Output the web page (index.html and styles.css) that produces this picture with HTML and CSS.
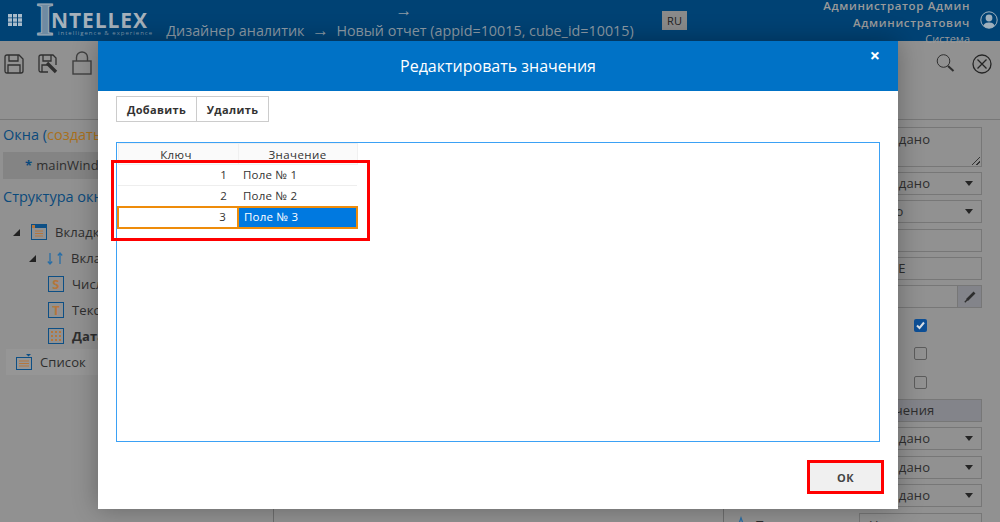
FILE: index.html
```html
<!DOCTYPE html>
<html lang="ru">
<head>
  <meta charset="UTF-8">
  <meta name="viewport" content="width=device-width, initial-scale=1.0">
  <title>Редактировать значения</title>
  <link rel="stylesheet" href="styles.css">
</head>
<body>
  <header class="top-bar">
    <svg class="apps-icon" width="14" height="12" viewBox="0 0 14 12"><path d="M0 0h4v3.4H0zM5 0h4v3.4H5zM10 0h4v3.4h-4zM0 4.3h4v3.4H0zM5 4.3h4v3.4H5zM10 4.3h4v3.4h-4zM0 8.6h4V12H0zM5 8.6h4V12H5zM10 8.6h4V12h-4z" fill="#a9bccb"/></svg>
    <div class="logo">
      <span class="logo-i">I</span>
      <div class="logo-words">
        <span class="logo-name">NTELLEX</span>
        <span class="logo-sub">intelligence &amp; experience</span>
      </div>
    </div>
    <div class="crumbs">&nbsp;&nbsp;<span class="arr">→</span><br>Дизайнер аналитик &nbsp;<span class="arr">→</span>&nbsp; Новый отчет (appid=10015, cube_id=10015)</div>
    <div class="lang">RU</div>
    <div class="user">
      <div class="user-name">Администратор Админ<br>Администратович</div>
      <div class="user-role">Система</div>
    </div>
    <svg class="avatar" width="18" height="18" viewBox="0 0 18 18"><circle cx="9" cy="9" r="8.2" fill="none" stroke="#9fb0bd" stroke-width="1"/><circle cx="9" cy="7" r="3.4" fill="#9fb0bd"/><path d="M3.4 15c.6-3 3-3.6 5.600-3.600s5 .6 5.600 3.600A8 8 0 0 1 3.400 15z" fill="#9fb0bd"/></svg>
  </header>

  <div class="toolbar">
    <div class="tool-group">
      <svg width="20" height="20" viewBox="0 0 20 20" fill="none" stroke="#303030" stroke-width="1.3"><path d="M1 3q0-2 2-2h12l4 4v12q0 2-2 2H3q-2 0-2-2z"/><path d="M5 1v6h9V1M4 19v-8h12v8"/></svg>
      <svg width="20" height="20" viewBox="0 0 20 20" fill="none" stroke="#303030" stroke-width="1.3"><path d="M1 3q0-2 2-2h12l3 3v7M10 18H3q-2 0-2-2V3"/><path d="M5 1v6h8V1M4 18v-7h6"/><path d="M9 9l9 9" stroke-width="3.4"/></svg>
      <svg class="lock" width="20" height="24" viewBox="0 0 20 24" fill="none" stroke="#404040" stroke-width="1.4"><rect x="1" y="10" width="18" height="13"/><path d="M4.500 10V6.500a5.500 5.500 0 0 1 11 0V10"/></svg>
    </div>
    <div class="tool-group wide">
      <svg width="19" height="18" viewBox="0 0 19 18" fill="none" stroke="#303030"><circle cx="7.500" cy="7" r="6.300" stroke-width="1"/><path d="M12 12l5.500 5" stroke-width="2"/></svg>
      <svg width="20" height="20" viewBox="0 0 20 20" fill="none" stroke="#252525" stroke-width="1.300"><circle cx="10" cy="10" r="9"/><path d="M5.500 5.500l9 9M14.500 5.500l-9 9"/></svg>
    </div>
  </div>

  <main class="workspace">
    <aside class="left-panel">
      <div class="panel-title">Окна (<span class="accent">создать</span>)</div>
      <div class="window-row"><span class="star">*</span>mainWindow</div>
      <div class="panel-title structure-title">Структура окна</div>
      <ul class="tree">
        <li class="tree-row">
          <i class="caret"></i>
          <svg class="node-icon" width="16" height="16" viewBox="0 0 16 16" fill="none"><rect x=".5" y=".5" width="15" height="15" stroke="#0d4f85"/><path d="M1 1h14v3H1z" fill="#0d4f85"/><path d="M1 1h3v3H1z" fill="#b5763c"/><path d="M4 7h8M4 9.500h8M4 12h8" stroke="#b5763c"/></svg>
          <span>Вкладки</span>
        </li>
        <li class="tree-row indent-1">
          <i class="caret"></i>
          <svg class="node-icon" width="16" height="16" viewBox="0 0 16 16" fill="none" stroke="#2a6ea5" stroke-width="1.300"><path d="M3 3v11M.8 11.500L3 14l2.200-2.500M13 14V3M10.800 5.500L13 3l2.200 2.500"/></svg>
          <span>Вкладка</span>
        </li>
        <li class="tree-row indent-2">
          <span class="box-icon">S</span><span>Числовое</span>
        </li>
        <li class="tree-row indent-2">
          <span class="box-icon">T</span><span>Текстовое</span>
        </li>
        <li class="tree-row indent-2">
          <svg class="node-icon" width="16" height="16" viewBox="0 0 16 16" fill="none"><rect x=".5" y=".5" width="15" height="15" stroke="#0d4f85"/><path d="M3 3h2v2H3zM7 3h2v2H7zM11 3h2v2h-2zM3 7h2v2H3zM7 7h2v2H7zM11 7h2v2h-2zM3 11h2v2H3zM7 11h2v2H7zM11 11h2v2h-2z" fill="#b5763c"/></svg>
          <b>Дата</b>
        </li>
        <li class="tree-row list-row">
          <svg class="node-icon" width="16" height="16" viewBox="0 0 16 16" fill="none"><rect x=".5" y="3.500" width="15" height="12" stroke="#0d4f85"/><path d="M3 7h10M3 9.500h10M3 12h10" stroke="#b5763c"/><path d="M10 0h5l-2.500 2.500z" fill="#0d4f85"/></svg>
          <span>Список</span>
        </li>
      </ul>
    </aside>

    <section class="center-panel"></section>

    <aside class="right-panel">
      <div class="field tall">Не задано<i class="grip"></i></div>
      <div class="field">Не задано<i class="arrow"></i></div>
      <div class="field">Никто<i class="arrow"></i></div>
      <div class="field"></div>
      <div class="field upper">ПОЛЕ</div>
      <div class="field-pair">
        <div class="field"></div>
        <div class="pen-btn">
          <svg width="12" height="12" viewBox="0 0 12 12" fill="none" stroke="#2e2e2e"><path d="M3 9l7.500-7.500" stroke-width="2.600"/><path d="M3.500 8.500L.8 11.200" stroke-width="1.400"/></svg>
        </div>
      </div>
      <div class="check-row"><i class="check on">
        <svg width="13" height="13" viewBox="0 0 13 13" fill="none" stroke="#d8dfe6" stroke-width="2"><path d="M3 6.500l2.500 2.500 4.500-5.500"/></svg>
      </i></div>
      <div class="check-row"><i class="check"></i></div>
      <div class="check-row"><i class="check"></i></div>
      <div class="field bar">Значения</div>
      <div class="field">Не задано<i class="arrow"></i></div>
      <div class="field">Не задано<i class="arrow"></i></div>
      <div class="field">Не задано<i class="arrow"></i></div>
      <div class="last-row">
        <svg width="14" height="14" viewBox="0 0 14 14" fill="none" stroke="#2a6ea5" stroke-width="1.300"><path d="M1 13L5 2l4 11M3 9h5"/></svg>
        <span class="last-label">Подпись</span>
        <div class="field">Не задано</div>
      </div>
    </aside>
  </main>

  <div class="modal">
    <div class="modal-head">
      Редактировать значения
      <span class="modal-close">×</span>
    </div>
    <div class="modal-body">
      <div class="btn-group">
        <button class="btn">Добавить</button>
        <button class="btn">Удалить</button>
      </div>
      <div class="grid-box">
        <table class="values">
          <thead>
            <tr><th class="key-head">Ключ</th><th>Значение</th></tr>
          </thead>
          <tbody>
            <tr><td class="key">1</td><td>Поле № 1</td></tr>
            <tr><td class="key">2</td><td>Поле № 2</td></tr>
            <tr class="selected"><td class="key">3</td><td>Поле № 3</td></tr>
          </tbody>
        </table>
        <div class="mark-table"></div>
      </div>
      <div class="modal-foot">
        <button class="ok-btn">ОК</button>
      </div>
    </div>
  </div>
</body>
</html>
```

FILE: styles.css
```css
* {
  box-sizing: border-box;
}
html, body {
  height: 100%;
}
body {
  margin: 0;
  position: relative;
  height: 522px;
  overflow: hidden;
  background-color: #919191;
  color: #2e2e2e;
  font-family: "Open Sans", "Noto Sans", sans-serif;
  font-size: 13px;
}

/* top bar */
.top-bar {
  display: flex;
  height: 41px;
  background-color: #004274;
  color: #8c9aa5;
}
.apps-icon {
  margin: 14px 0 0 8px;
  flex: none;
}
.logo {
  display: flex;
  width: 115px;
  margin-left: 14px;
  color: #a3aeb8;
}
.logo-i {
  width: 15px;
  margin-top: -5px;
  font: bold 46px/50px "Liberation Serif", serif;
  color: #6f8ba2;
  -webkit-text-stroke: 1px #a3aeb8;
}
.logo-words {
  display: flex;
  flex-direction: column;
  margin-top: 10px;
}
.logo-name {
  font: bold 21px/20px "Open Sans", sans-serif;
  letter-spacing: .9px;
  color: #a6b1bb;
}
.logo-sub {
  margin-left: 7px;
  font-size: 6px;
  line-height: 7px;
  letter-spacing: 1px;
  white-space: nowrap;
  color: #7f97aa;
}
.crumbs {
  width: 480px;
  margin-left: 9px;
  padding-top: 1px;
  text-align: center;
  font-size: 14.35px;
  line-height: 20px;
}
.arr {
  font-family: "Liberation Sans", sans-serif;
  font-size: 17px;
}
.lang {
  width: 25px;
  height: 19px;
  margin: 11px 0 0 22px;
  background-color: #8a8a8a;
  color: #1d1d1d;
  font-size: 11px;
  line-height: 19px;
  text-align: center;
}
.user {
  flex: 1;
  text-align: right;
  font-size: 11.5px;
  line-height: 17px;
  margin-top: -3px;
  color: #9a9a9a;
  white-space: nowrap;
}
.user-name {
  font-weight: 600;
  letter-spacing: .65px;
}
.user-role {
  line-height: 15px;
  font-size: 11px;
}
.avatar {
  margin: 11px 2px 0 10px;
  flex: none;
}

/* toolbar */
.toolbar {
  display: flex;
  justify-content: space-between;
  height: 79px;
  padding: 11px 8px 0 4px;
  border-bottom: 1px solid #777;
}
.tool-group {
  display: flex;
  align-items: flex-start;
  gap: 14px;
}
.tool-group.wide {
  gap: 17px;
}
.tool-group svg {
  margin-top: 2px;
}
.tool-group .lock {
  margin-top: -1px;
}
.workspace {
  display: grid;
  grid-template-columns: 273px 1fr 276px;
  height: 402px;
}

/* left */
.left-panel {
  padding: 5px 0 0 3px;
}
.panel-title {
  font-size: 14.5px;
  line-height: 20px;
  color: #0b4a7c;
  white-space: nowrap;
}
.accent {
  color: #a9701c;
}
.window-row {
  height: 27px;
  margin-top: 7px;
  padding-left: 22px;
  background-color: #848484;
  line-height: 27px;
  letter-spacing: .1px;
}
.star {
  margin-right: 4px;
  color: #0b4a7c;
  font-weight: bold;
}
.structure-title {
  margin-top: 8px;
}
.tree {
  list-style: none;
  margin: 12px 0 0;
  padding: 0;
}
.tree-row {
  display: flex;
  align-items: center;
  height: 26px;
  padding-left: 10px;
  letter-spacing: .1px;
}
.caret {
  width: 0;
  height: 0;
  margin-right: 11px;
  border-style: solid;
  border-width: 0 0 7px 7px;
  border-color: transparent transparent #222 transparent;
}
.node-icon {
  flex: none;
  margin-right: 8px;
}
.indent-1 {
  padding-left: 26px;
}
.indent-2 {
  padding-left: 45px;
}
.box-icon {
  width: 16px;
  height: 16px;
  margin-right: 8px;
  border: 1px solid #0d4f85;
  color: #b5763c;
  font-size: 13px;
  font-weight: bold;
  line-height: 14px;
  text-align: center;
}
.list-row {
  margin-left: 3px;
  padding-left: 10px;
  background-color: #969696;
}

/* center + right */
.center-panel {
  border-left: 1px solid #6e6e6e;
  border-right: 1px solid #6e6e6e;
}
.right-panel {
  display: flex;
  flex-direction: column;
  align-items: flex-end;
  gap: 5.4px;
  padding: 6.5px 18px 0 0;
}
.field {
  position: relative;
  flex: none;
  width: 123px;
  height: 23px;
  padding-left: 4px;
  border: 1px solid #777;
  line-height: 21px;
  letter-spacing: .2px;
  white-space: nowrap;
}
.field.tall {
  height: 40px;
  padding-top: 1px;
}
.field.upper {
  padding-left: 9px;
}
.field-pair {
  display: flex;
  flex: none;
}
.field-pair .field {
  width: 99px;
}
.pen-btn {
  display: flex;
  align-items: center;
  justify-content: center;
  width: 25px;
  height: 23px;
  margin-left: -1px;
  background-color: #83848a;
  border: 1px solid #777;
}
.arrow {
  position: absolute;
  right: 8px;
  top: 8px;
  border-style: solid;
  border-width: 5px 4px 0 4px;
  border-color: #252525 transparent transparent transparent;
}
.grip {
  position: absolute;
  right: 1px;
  bottom: 1px;
  width: 8px;
  height: 8px;
  background: linear-gradient(135deg, transparent 45%, #333 45%, #333 55%, transparent 55%, transparent 72%, #333 72%, #333 82%, transparent 82%);
}
.check-row {
  flex: none;
  display: flex;
  align-items: center;
  width: 123px;
  height: 23px;
  padding-left: 55px;
}
.check {
  display: block;
  width: 13px;
  height: 13px;
  border: 1px solid #5c5c5c;
  border-radius: 2px;
}
.check.on {
  border: 0;
  background-color: #0d4f96;
}
.check.on svg {
  display: block;
}
.field.bar {
  padding-left: 11px;
  background-color: #83848a;
}
.last-row {
  display: flex;
  flex: none;
  align-items: flex-start;
  width: 246px;
  height: 23px;
}
.last-row svg {
  margin: 3px 5px 0 0;
}
.last-label {
  width: 104px;
  margin-top: 3px;
}
.last-row .field {
  padding-left: 9px;
  line-height: 23px;
}

/* modal */
.modal {
  position: absolute;
  left: 98px;
  top: 41px;
  width: 800px;
  height: 468px;
  background-color: #fff;
  box-shadow: 0 0 24px rgba(0, 0, 0, .3);
}
.modal-head {
  position: relative;
  height: 50px;
  background-color: #0072c6;
  color: #fff;
  font-size: 16px;
  line-height: 50px;
  text-align: center;
}
.modal-close {
  position: absolute;
  right: 18px;
  top: 0;
  font-size: 18px;
  font-weight: bold;
  line-height: 28px;
}
.modal-body {
  padding: 5px 18px 0;
}
.btn-group {
  display: flex;
}
.btn {
  height: 26px;
  margin-right: -1px;
  padding: 0;
  background-color: #fff;
  border: 1px solid #ccc;
  color: #333;
  font-family: inherit;
  font-size: 11px;
  font-weight: bold;
  letter-spacing: .35px;
}
.btn:first-child {
  width: 81px;
}
.btn:last-child {
  width: 73px;
}
.grid-box {
  position: relative;
  height: 300px;
  margin-top: 20px;
  border: 1px solid #3ba1f5;
}
.values {
  width: 241px;
  border-collapse: collapse;
  table-layout: fixed;
  color: #333;
  font-size: 11.5px;
}
.values th {
  height: 21px;
  padding: 0;
  background-color: #fafafa;
  border: 1px solid #f0f0f0;
  font-size: 11.5px;
  font-weight: normal;
  letter-spacing: .4px;
}
.values .key-head {
  width: 120px;
  padding-right: 4px;
}
.values td {
  height: 21px;
  padding: 0 0 1px 5px;
  border-bottom: 1px solid #eee;
  letter-spacing: .2px;
}
.values td.key {
  padding: 0 11px 1px 0;
  text-align: right;
}
.selected td {
  background-color: #fff;
  border: 2px solid #ee8c0a;
}
.selected td:last-child {
  background-color: #0079e0;
  color: #fff;
}
.mark-table {
  position: absolute;
  left: -6px;
  top: 17px;
  width: 259px;
  height: 81px;
  border: 3px solid #f00;
}
.modal-foot {
  display: flex;
  justify-content: flex-end;
  margin: 18px -4px 0 0;
}
.ok-btn {
  width: 77px;
  height: 34px;
  padding: 0;
  background-color: #f0f0f0;
  border: 3px solid #f00;
  color: #444;
  font-family: inherit;
  font-size: 11px;
  font-weight: bold;
  letter-spacing: .5px;
}
```
